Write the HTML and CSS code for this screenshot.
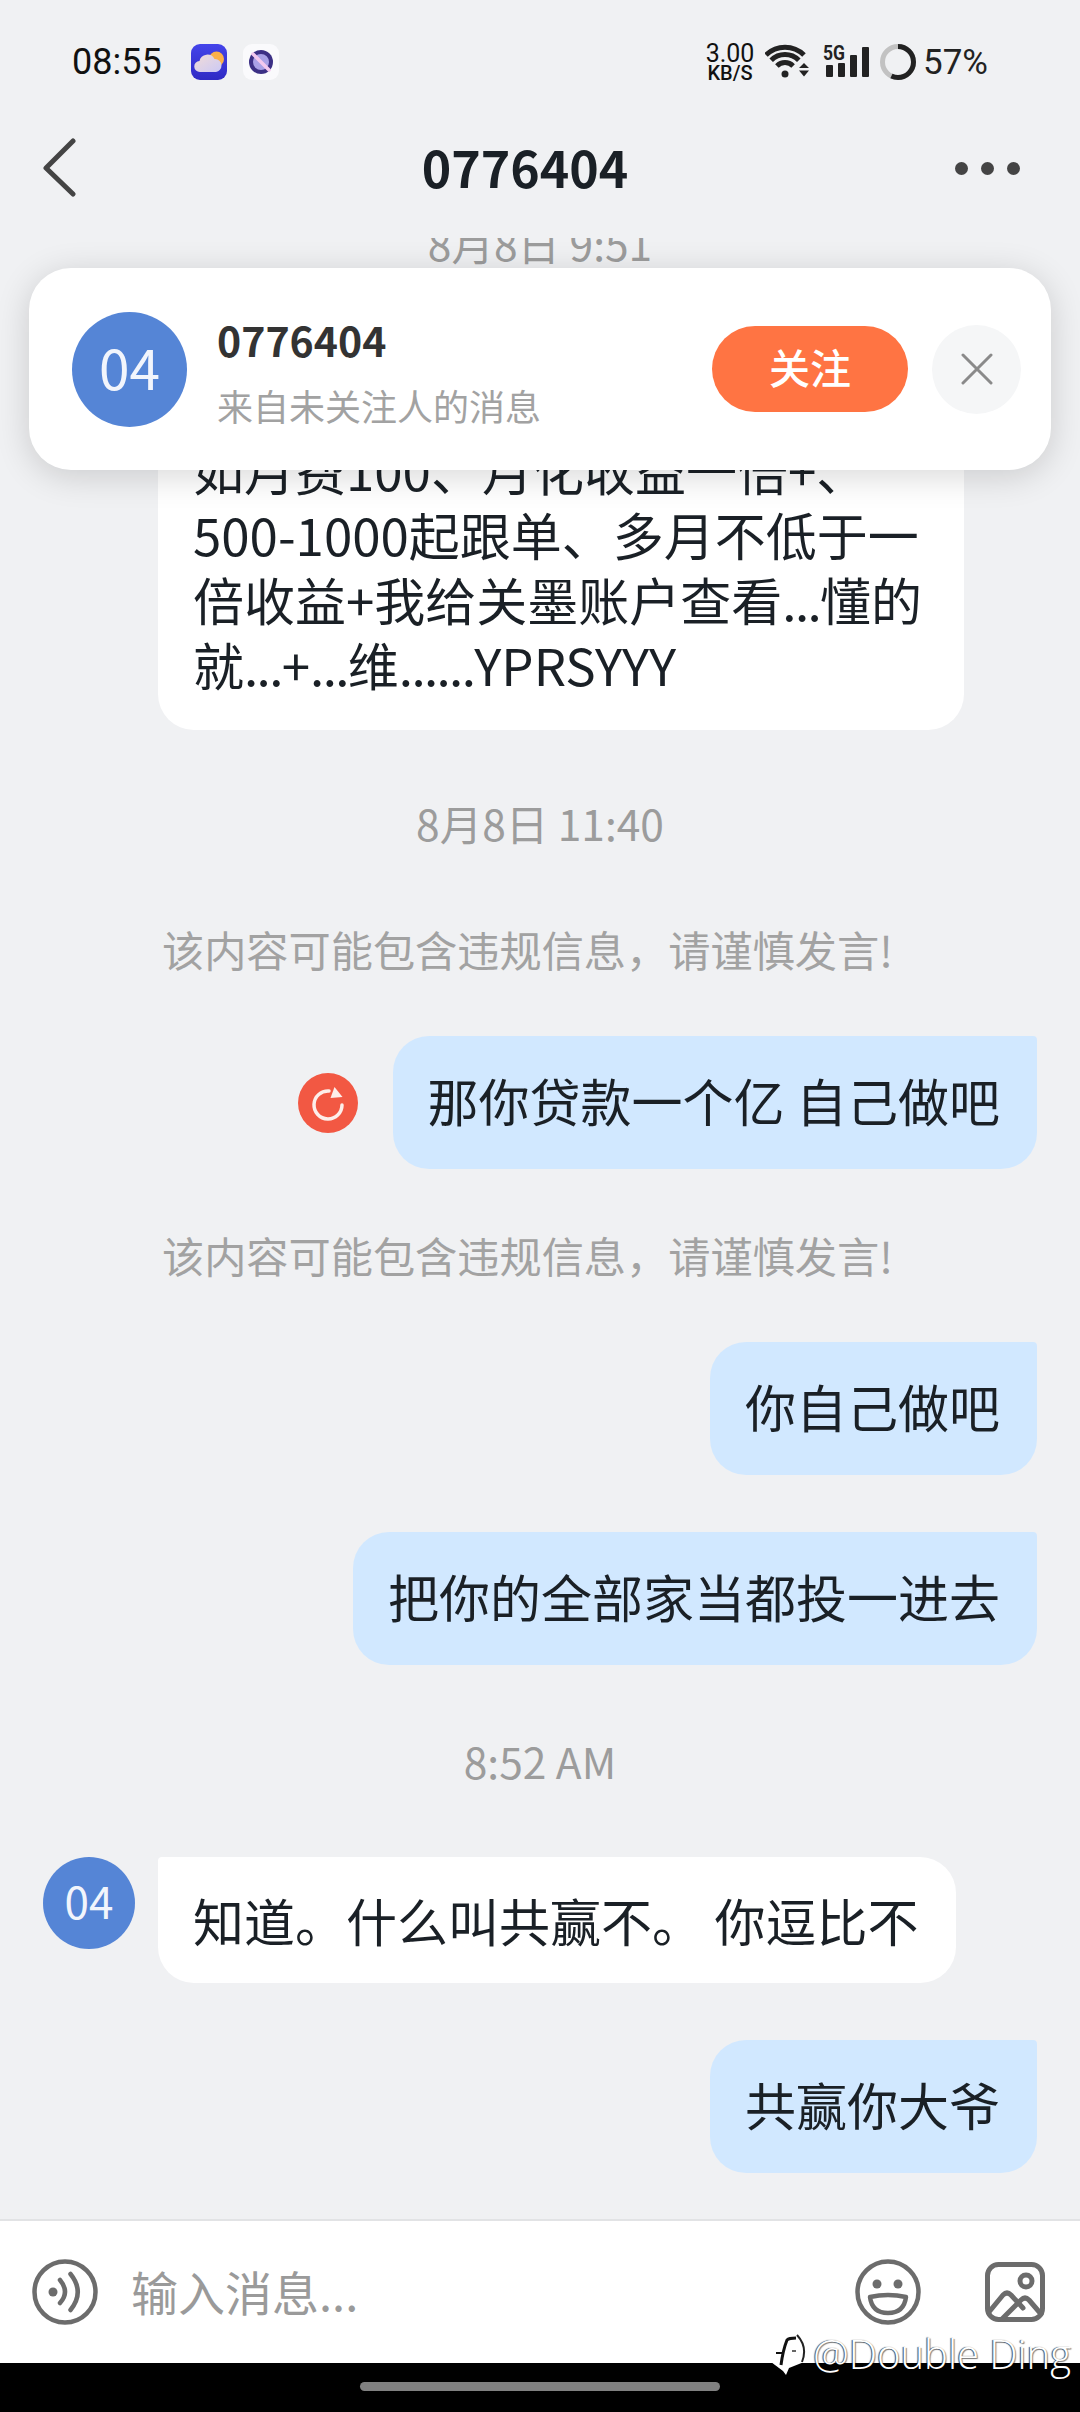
FILE: index.html
```html
<!DOCTYPE html>
<html lang="zh">
<head>
<meta charset="utf-8">
<title>0776404</title>
<link rel="stylesheet" href="styles.css">
</head>
<body>
<div class="app">
  <div class="status">
    <div class="status-left">
      <span class="clock">08:55</span>
      <svg class="app-icon weather" viewBox="0 0 36 36">
        <defs>
          <linearGradient id="wbg" x1="0" y1="0" x2="0" y2="1"><stop offset="0" stop-color="#4444ea"/><stop offset="1" stop-color="#2f2ac4"/></linearGradient>
          <linearGradient id="cld" x1="0" y1="0" x2="1" y2="1"><stop offset="0" stop-color="#f2dcd8"/><stop offset="1" stop-color="#cbc9f5"/></linearGradient>
        </defs>
        <rect width="36" height="36" rx="9" fill="url(#wbg)"/>
        <circle cx="25.5" cy="15" r="7.5" fill="#fbb04a"/>
        <path d="M9 28a5.500 5.500 0 0 1-.5-11 8 8 0 0 1 15-2 6.500 6.500 0 0 1 7 6.500A6.500 6.500 0 0 1 25 28z" fill="url(#cld)"/>
      </svg>
      <svg class="app-icon" viewBox="0 0 36 36">
        <rect width="36" height="36" rx="9" fill="#fafafc"/>
        <circle cx="18" cy="18" r="12" fill="#3c3085"/>
        <circle cx="18" cy="18" r="8" fill="#a9a1e6"/>
        <path d="M10 10L26 26" stroke="#f3c8ee" stroke-width="3.500" stroke-linecap="round"/>
      </svg>
    </div>
    <div class="status-right">
      <div class="speed"><span class="speed-num">3.00</span><span class="speed-unit">KB/S</span></div>
      <svg class="wifi" viewBox="0 0 46 36" fill="none" stroke="#222" stroke-width="5">
        <path d="M1 11A27 27 0 0 1 39 11"/>
        <path d="M6.200 16.200A19.500 19.500 0 0 1 33.800 16.200"/>
        <path d="M11.900 21.900A11.500 11.500 0 0 1 28.100 21.900"/>
        <circle cx="20" cy="30" r="3.500" fill="#222" stroke="none"/>
        <path d="M34 24l5-5 5 5zM34 26.500h10l-5 6z" fill="#222" stroke="none"/>
      </svg>
      <svg class="signal" viewBox="0 0 48 36">
        <text class="five-g" x="0" y="16" textLength="22" lengthAdjust="spacingAndGlyphs">5G</text>
        <rect x="3" y="21" width="7" height="12" rx="1" fill="#222"/>
        <rect x="15" y="19" width="7" height="14" rx="1" fill="#222"/>
        <rect x="27" y="11" width="7" height="22" rx="1" fill="#222"/>
        <rect x="39" y="3" width="7" height="30" rx="1" fill="#222"/>
      </svg>
      <svg class="ring" viewBox="0 0 36 36" fill="none" stroke-width="5">
        <circle cx="18" cy="18" r="15.500" stroke="#c2c2c2"/>
        <circle cx="18" cy="18" r="15.500" stroke="#222" pathLength="100" stroke-dasharray="57 43" transform="rotate(-90 18 18)"/>
      </svg>
      <span class="battery">57%</span>
    </div>
  </div>

  <header class="topbar">
    <svg class="back" viewBox="0 0 52 60" fill="none" stroke="#444" stroke-width="5" stroke-linecap="round" stroke-linejoin="round">
      <path d="M30 3L3 30L30 56"/>
    </svg>
    <h1 class="title">0776404</h1>
    <div class="more"><i></i><i></i><i></i></div>
  </header>

  <main class="chat">
    <div class="log">
      <div class="stamp first">8月8日 9:51</div>
      <div class="row recv">
        <div class="bubble in long">如月费100、月化收益一倍+、<br>500-1000起跟单、多月不低于一<br>倍收益+我给关墨账户查看<span class="dots">...</span>懂的<br>就<span class="dots">...</span>+<span class="dots">...</span>维<span class="dots">......</span>YPRSYYY</div>
      </div>
      <div class="stamp">8月8日 11:40</div>
      <div class="warn">该内容可能包含违规信息，请谨慎发言!</div>
      <div class="row sent">
        <svg class="retry" viewBox="0 0 60 60">
          <circle cx="30" cy="30" r="30" fill="#f25843"/>
          <path d="M44 32A14 14 0 1 1 31 18" fill="none" stroke="#fdeeea" stroke-width="3.500" stroke-linecap="round"/>
          <path d="M36.500 14L44.500 24L32.500 25z" fill="#fdeeea"/>
        </svg>
        <div class="bubble out">那你贷款一个亿 自己做吧</div>
      </div>
      <div class="warn">该内容可能包含违规信息，请谨慎发言!</div>
      <div class="row sent"><div class="bubble out">你自己做吧</div></div>
      <div class="row sent"><div class="bubble out">把你的全部家当都投一进去</div></div>
      <div class="stamp">8:52 AM</div>
      <div class="row recv">
        <div class="avatar small">04</div>
        <div class="bubble in">知道。什么叫共赢不。 你逗比不</div>
      </div>
      <div class="row sent"><div class="bubble out">共赢你大爷</div></div>
    </div>

    <div class="follow-card">
      <div class="avatar large">04</div>
      <div class="follow-info">
        <div class="follow-name">0776404</div>
        <div class="follow-sub">来自未关注人的消息</div>
      </div>
      <div class="follow-btn">关注</div>
      <div class="follow-close">
        <svg viewBox="0 0 32 32" fill="none" stroke="#8a8a8a" stroke-width="3" stroke-linecap="round"><path d="M2 2L30 30M30 2L2 30"/></svg>
      </div>
    </div>
  </main>

  <footer class="inputbar">
    <svg class="tool" viewBox="0 0 66 66" fill="none" stroke="#6c6c6c" stroke-width="4.500" stroke-linecap="round">
      <circle cx="33" cy="33" r="30.500"/>
      <circle cx="21" cy="33" r="4.500" fill="#6c6c6c" stroke="none"/>
      <path d="M28 21Q38 33 28 44"/>
      <path d="M38.500 15Q53 33 38.500 51"/>
    </svg>
    <div class="placeholder">输入消息...</div>
    <svg class="tool" viewBox="0 0 66 66" fill="none" stroke="#6c6c6c" stroke-width="4.500" stroke-linejoin="round">
      <circle cx="33" cy="33" r="30.500"/>
      <circle cx="22" cy="25" r="4.500" fill="#6c6c6c" stroke="none"/>
      <circle cx="43" cy="25" r="4.500" fill="#6c6c6c" stroke="none"/>
      <path d="M15 38Q33 34 51 38Q49 54 33 54Q17 54 15 38Z"/>
    </svg>
    <svg class="tool pic" viewBox="0 0 60 60" fill="none" stroke="#6c6c6c" stroke-width="5" stroke-linecap="round" stroke-linejoin="round">
      <rect x="2.500" y="2.500" width="55" height="55" rx="11"/>
      <circle cx="41" cy="19" r="6"/>
      <path d="M4 50L18 33Q22 29 26 33L38 46"/>
      <path d="M17 57L36 38Q40 34 44 38L56 52"/>
    </svg>
  </footer>

  <div class="navbar"><div class="pill"></div></div>

  <div class="watermark">
    <svg class="wm-logo" viewBox="0 0 36 44" fill="none">
      <path d="M0 30L10 28L30 28L33 30L18 36L15 43L12 39Z" fill="#fff"/>
      <path d="M26 3Q37 15 31 30" stroke="#222" stroke-width="2"/>
      <path d="M25 6Q18 6 16 8Q12 18 10 33" stroke="#111" stroke-width="3"/>
      <path d="M5 21H12" stroke="#111" stroke-width="2"/>
      <path d="M21 19H25" stroke="#333" stroke-width="1.500"/>
    </svg>
    <span class="wm-text">@Double Ding</span>
  </div>
</div>
</body>
</html>
```
FILE: styles.css
```css
* { box-sizing: border-box; }
html, body { margin: 0; padding: 0; }
body { background: #f0f1f3; font-family: "Noto Sans CJK SC", "Noto Sans", sans-serif; }

.app {
  position: relative;
  width: 1080px;
  height: 2412px;
  display: flex;
  flex-direction: column;
  overflow: hidden;
  background: #f0f1f3;
}

/* status bar */
.status {
  height: 120px;
  padding: 4px 92px 0 72px;
  display: flex;
  align-items: center;
  justify-content: space-between;
  flex: none;
  color: #111;
  font-family: Roboto, sans-serif;
}
.status-left { display: flex; align-items: center; }
.clock { font-size: 36px; font-weight: 400; width: 119px; }
.app-icon { width: 36px; height: 36px; margin-right: 16px; display: block; }
.status-right { display: flex; align-items: center; }
.speed { display: flex; flex-direction: column; align-items: center; width: 50px; margin-right: 10px; }
.speed-num { font-size: 25px; line-height: 22px; }
.speed-unit { font-size: 20px; line-height: 16px; font-weight: 500; }
.wifi { width: 46px; height: 36px; margin-right: 12px; display: block; }
.signal { width: 48px; height: 36px; margin-right: 9px; display: block; }
.five-g { font: 700 21px Roboto, sans-serif; fill: #222; }
.ring { width: 36px; height: 36px; margin-right: 7px; display: block; }
.battery { font-size: 35px; color: #222; }

/* top bar */
.topbar {
  height: 118px;
  padding: 0 60px 22px 43px;
  display: flex;
  align-items: center;
  justify-content: space-between;
  flex: none;
}
.back { width: 52px; height: 60px; display: block; }
.title { margin: 0 0 4px; font-size: 50px; font-weight: 700; color: #1a2026; line-height: 70px; }
.more { display: flex; gap: 12px; width: 65px; justify-content: space-between; }
.more i { width: 13px; height: 13px; border-radius: 50%; background: #444; display: block; }

/* chat */
.chat {
  position: relative;
  flex: 1;
  min-height: 0;
  overflow: hidden;
  display: flex;
  flex-direction: column;
  justify-content: flex-end;
}
.log { padding-bottom: 46px; }
.stamp {
  margin: 66px 0 66px;
  text-align: center;
  font-size: 42.5px;
  line-height: 60px;
  color: #9c9c9c;
}
.row.recv + .stamp { margin-top: 63px; }
.stamp.first { margin-bottom: 134px; }
.warn {
  margin: 56px 0 57px;
  padding-left: 162px;
  font-size: 42.2px;
  line-height: 60px;
  color: #a2a2a2;
}
.row { display: flex; }
.row + .row { margin-top: 57px; }
.row.sent { justify-content: flex-end; align-items: center; padding-right: 43px; }
.row.recv { padding-left: 43px; align-items: flex-start; }
.bubble {
  font-size: 51px;
  line-height: 67px;
  color: #1a2026;
  white-space: nowrap;
}
.bubble.out {
  padding: 31px 37px 35px 35px;
  background: #d1e8ff;
  border-radius: 36px 4px 36px 36px;
}
.bubble.in {
  margin-left: 23px;
  padding: 30px 38px 29px 35px;
  background: #fff;
  border-radius: 4px 36px 36px 36px;
}
.bubble.long {
  margin-left: 115px;
  width: 806px;
  line-height: 65px;
  padding-bottom: 33px;
}
.dots { letter-spacing: -1.6px; }
.retry { width: 60px; height: 60px; margin-right: 35px; flex: none; display: block; }
.avatar {
  flex: none;
  border-radius: 50%;
  background: #5585d6;
  color: #f2f5fc;
  display: flex;
  align-items: center;
  justify-content: center;
  padding-bottom: 6px;
}
.avatar.small { width: 92px; height: 92px; font-size: 44px; }
.avatar.large { width: 115px; height: 115px; font-size: 55px; }

/* follow card, floating over the chat */
.follow-card {
  position: absolute;
  top: 30px;
  left: 29px;
  width: 1022px;
  height: 202px;
  padding: 0 30px 0 43px;
  display: flex;
  align-items: center;
  background: #fff;
  border-radius: 42px;
  box-shadow: 0 6px 34px rgba(0, 0, 0, 0.16);
}
.follow-info { flex: 1; margin: 6px 0 0 30px; }
.follow-name { font-size: 41px; line-height: 50px; font-weight: 700; color: #333; }
.follow-sub { margin-top: 16px; font-size: 36px; line-height: 50px; color: #a2a2a2; }
.follow-btn {
  width: 196px;
  height: 86px;
  padding-bottom: 6px;
  border-radius: 43px;
  background: #ff7443;
  color: #fff;
  font-size: 41px;
  font-weight: 500;
  display: flex;
  align-items: center;
  justify-content: center;
}
.follow-close {
  width: 89px;
  height: 89px;
  margin-left: 24px;
  border-radius: 50%;
  background: #f5f6f7;
  display: flex;
  align-items: center;
  justify-content: center;
}
.follow-close svg { width: 32px; height: 32px; display: block; }

/* input bar */
.inputbar {
  flex: none;
  height: 144px;
  padding: 0 35px 0 32px;
  display: flex;
  align-items: center;
  background: #fff;
  border-top: 2px solid #e2e3e5;
}
.tool { width: 66px; height: 66px; flex: none; display: block; }
.tool.pic { width: 60px; height: 60px; margin-left: 64px; }
.placeholder { flex: 1; margin-left: 33px; padding-bottom: 3px; font-size: 47px; color: #9a9a9a; }

/* nav */
.navbar {
  flex: none;
  height: 49px;
  background: #000;
  padding-top: 19px;
  display: flex;
  justify-content: center;
}
.pill { width: 360px; height: 9px; border-radius: 5px; background: #808080; }

/* watermark, lying over the bars */
.watermark {
  position: absolute;
  right: 9px;
  top: 2326px;
  display: flex;
  align-items: center;
  gap: 6px;
}
.wm-logo { width: 36px; height: 44px; display: block; }
.wm-text {
  font-family: "Open Sans", sans-serif;
  font-weight: 300;
  font-size: 40px;
  color: #fff;
  text-shadow: -1px 0 1px rgba(0, 0, 0, 0.75), 1px 1px 1px rgba(0, 0, 0, 0.5);
}
```
